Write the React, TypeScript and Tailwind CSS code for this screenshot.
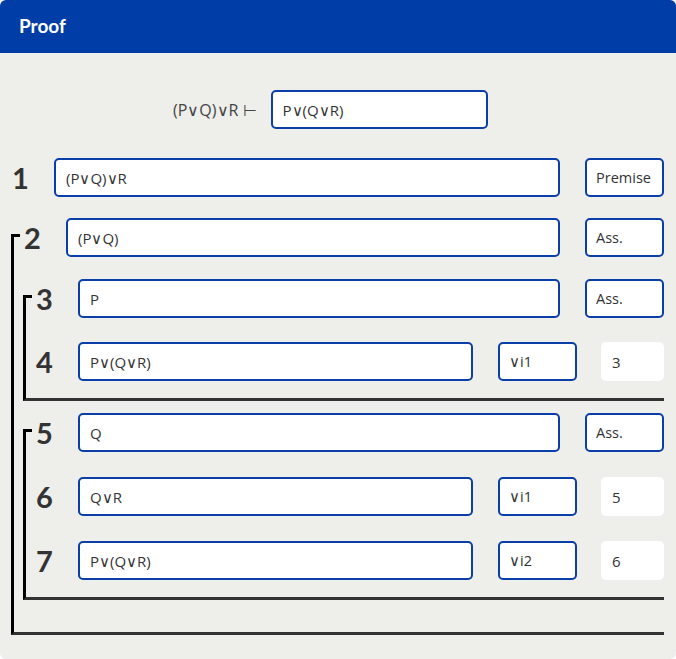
import type { ReactNode } from 'react'

type RowProps = {
  n: number
  formula: string
  rule: string
  cite?: string
  className?: string
}

const frame =
  "h-full rounded-[5px] border-2 border-[#0a3ea8] bg-white font-['Open_Sans',sans-serif] text-[#333] outline-none"
const box = `${frame} px-[10px] text-[15px]`

function Row({ n, formula, rule, cite, className = '' }: RowProps) {
  return (
    <div className={`flex h-[39px] shrink-0 items-center ${className}`}>
      <span className="w-[43px] shrink-0 pl-[1px] text-[29px] font-bold leading-none text-[#333]">{n}</span>
      <input readOnly value={formula} className={`min-w-0 flex-1 ${box}`} />
      <input readOnly value={rule} className={`ml-[25px] w-[79px] shrink-0 pl-[9px] pr-[2px] text-[14.5px] ${frame}`} />
      {cite && (
        <input
          readOnly
          value={cite}
          className="ml-[24px] h-full w-[63px] shrink-0 rounded-[5px] bg-white px-[11px] font-['Open_Sans',sans-serif] text-[15px] text-[#333] outline-none"
        />
      )}
    </div>
  )
}

function Subproof({ children, className = '' }: { children: ReactNode; className?: string }) {
  return (
    <div className={`relative flex flex-col border-b-[3px] border-l-[3px] border-b-[#333] border-l-black pl-[9px] ${className}`}>
      <span className="absolute -left-[3px] top-0 h-[3px] w-[9px] bg-black" />
      {children}
    </div>
  )
}

export default function App() {
  return (
    <div className="flex w-[676px] flex-col overflow-hidden rounded-md bg-[#eeeeea] pb-[24px] font-['Lato',sans-serif]">
      <div className="flex h-[53px] items-center bg-[#003da6] px-[19px]">
        <h1 className="text-[19px] font-bold text-white">Proof</h1>
      </div>

      <div className="mt-[37px] flex h-[39px] items-center pl-[173px]">
        <span className="mr-[14px] font-['Open_Sans',sans-serif] text-[16px] text-[#444]">(P∨Q)∨R ⊢</span>
        <input readOnly value="P∨(Q∨R)" className={`w-[217px] ${box}`} />
      </div>

      <div className="flex flex-col pl-[11px] pr-[12px]">
        <Row n={1} formula="(P∨Q)∨R" rule="Premise" className="mt-[29px]" />

        <Subproof className="mt-[37px] pb-[32px]">
          <Row n={2} formula="(P∨Q)" rule="Ass." className="-mt-[16px]" />

          <Subproof className="mt-[38px] pb-[17px]">
            <Row n={3} formula="P" rule="Ass." className="-mt-[16px]" />
            <Row n={4} formula="P∨(Q∨R)" rule="∨i1" cite="3" className="mt-[24px]" />
          </Subproof>

          <Subproof className="mt-[28px] pb-[17px]">
            <Row n={5} formula="Q" rule="Ass." className="-mt-[16px]" />
            <Row n={6} formula="Q∨R" rule="∨i1" cite="5" className="mt-[25px]" />
            <Row n={7} formula="P∨(Q∨R)" rule="∨i2" cite="6" className="mt-[25px]" />
          </Subproof>
        </Subproof>
      </div>
    </div>
  )
}
